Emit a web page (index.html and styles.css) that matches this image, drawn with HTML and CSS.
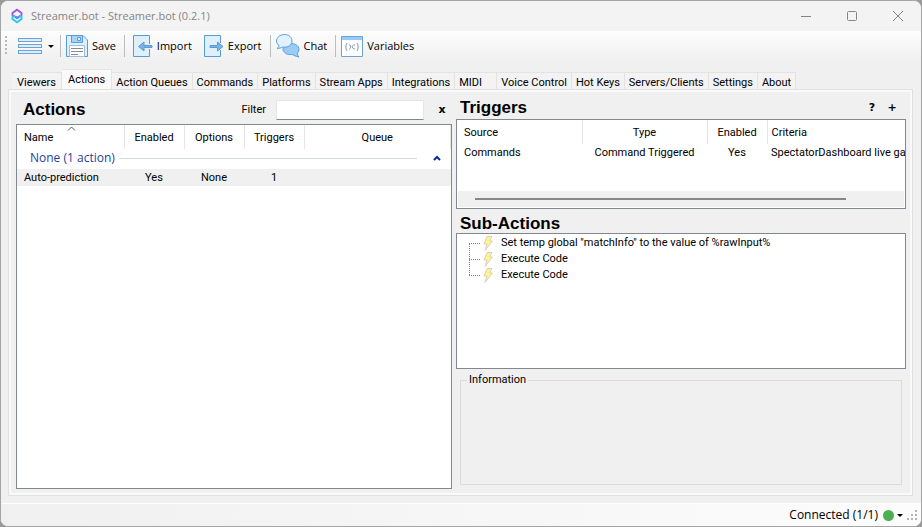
FILE: index.html
```html
<!DOCTYPE html>
<html lang="en">
<head>
<meta charset="utf-8">
<title>Streamer.bot - Streamer.bot (0.2.1)</title>
<link rel="stylesheet" href="styles.css">
</head>
<body>
<div class="window">
  <header class="titlebar">
    <svg class="logo" width="12" height="16" viewBox="0 0 12 16" fill="none" stroke-width="2">
      <path d="M3.500 8.500L1.500 7V5L6 1.800L10.500 5V7L6 10L4 8.500" stroke="#a45be0"/>
      <path d="M8.500 7.500L10.500 9V11L6 14.200L1.500 11V9L4 7.500" stroke="#2cc9ee"/>
      <path d="M4 8.500L6 10L8 8.500" stroke="#5b8cf0"/>
    </svg>
    <h1 class="caption">Streamer.bot - Streamer.bot (0.2.1)</h1>
    <div class="window-buttons">
      <button aria-label="Minimize"><svg width="12" height="12" viewBox="0 0 12 12"><path d="M1 6.500H11"/></svg></button>
      <button aria-label="Maximize"><svg width="12" height="12" viewBox="0 0 12 12"><rect x="1.500" y="1.500" width="9" height="9" rx="1"/></svg></button>
      <button aria-label="Close"><svg width="12" height="12" viewBox="0 0 12 12"><path d="M1 1L11 11M11 1L1 11"/></svg></button>
    </div>
  </header>

  <nav class="toolbar" aria-label="Main">
    <span class="grip"></span>
    <button class="tool menu" aria-label="Menu">
      <svg width="24" height="22" viewBox="0 0 24 22" fill="#dcedfb" stroke="#6ba3d6"><rect x=".5" y="3.500" width="23" height="3"/><rect x=".5" y="9.500" width="23" height="3"/><rect x=".5" y="15.500" width="23" height="3"/></svg>
      <i class="arrow"></i>
    </button>
    <button class="tool save">
      <svg width="22" height="22" viewBox="0 0 22 22" fill="#dff0fd" stroke="#5b9bd5"><path d="M.5.500H17L21.500 5V21.500H.5z"/><path d="M5.500.500H16.500V7.500H5.500z" fill="#a9d3f7"/><path d="M11.500 2.500H14.500V5.500H11.500z" fill="#e4f2fe"/><path d="M3.500 10.500H18.500V21.500H3.500z" fill="#fff" stroke="#9bbfe0"/><path d="M5 13.500H17M5 16.500H17M5 19.500H12" stroke="#8a8a8a"/></svg>
      Save
    </button>
    <button class="tool import">
      <svg width="20" height="22" viewBox="0 0 20 22" fill="#dff0fd" stroke="#5b9bd5"><path d="M16.500 9V.500H.5V21.500H16.500V14"/><path d="M5.500 11.500L11 7V10.500H19V12.500H11V16z" fill="#7ab4e6"/></svg>
      Import
    </button>
    <button class="tool export">
      <svg width="20" height="22" viewBox="0 0 20 22" fill="#dff0fd" stroke="#5b9bd5"><path d="M16.500 8V.500H.5V21.500H16.500V15"/><path d="M19 11.500L13.500 7V10.500H6V12.500H13.500V16z" fill="#7ab4e6"/></svg>
      Export
    </button>
    <button class="tool chat">
      <svg width="24" height="24" viewBox="0 0 24 24" stroke="#5a9ddb"><path d="M15 9.500C8 9.500 7 13 7 15C7 18.500 11 21 15.500 20.500C17.500 20.500 19 22.500 23 23C21.500 21.500 21 20 21.500 19C25 15 22 9.500 15 9.500z" fill="#99cbf8"/><path d="M8.500.5C4 .5.5 3.500.5 7C.5 9 1.500 10.500 3 11.500C3 13 2 14 1 14.500C3 14.500 5 14 6.500 13C12 14 16 11 16 7C16 3.500 13 .5 8.500.5z" fill="#e1f1fd"/></svg>
      Chat
    </button>
    <button class="tool variables">
      <svg width="22" height="22" viewBox="0 0 22 22" fill="none" stroke="#6ba3d6"><path d="M.5 1.500H21.500V21.500H.5z" fill="#fff"/><path d="M1 2H21V5H1z" fill="#99cbf8" stroke="none"/><path d="M6 8C4.500 10 4.500 14 6 16M16 8C17.500 10 17.500 14 16 16M8 10C10.500 9 10 14.500 8 14M14 10C10.500 9 10.500 14.500 14 14" stroke="#7797b5"/></svg>
      Variables
    </button>
  </nav>

  <nav class="tabs" aria-label="Sections">
    <a href="#viewers">Viewers</a><a href="#actions" class="active" aria-current="page">Actions</a><a href="#queues">Action Queues</a><a href="#commands">Commands</a><a href="#platforms">Platforms</a><a href="#apps">Stream Apps</a><a href="#integrations">Integrations</a><a href="#midi" class="short">MIDI</a><a href="#voice">Voice Control</a><a href="#keys">Hot Keys</a><a href="#servers">Servers/Clients</a><a href="#settings">Settings</a><a href="#about">About</a>
  </nav>

  <main class="page">
    <section class="actions">
      <div class="section-head filter-head">
        <h2>Actions</h2>
        <label for="filter">Filter</label>
        <input id="filter" type="text">
        <button class="glyph" aria-label="Clear filter">x</button>
      </div>
      <div class="list">
        <table class="action-table">
          <colgroup><col class="name"><col class="narrow"><col class="narrow"><col class="narrow"><col></colgroup>
          <thead><tr><th class="left sorted">Name<svg class="sort" width="9" height="5" viewBox="0 0 9 5" fill="none" stroke="#555"><path d="M1 4.500L4.500 1L8 4.500"/></svg></th><th>Enabled</th><th>Options</th><th>Triggers</th><th>Queue</th></tr></thead>
          <tbody>
            <tr class="group"><td colspan="5"><button class="group-toggle"><span>None (1 action)</span><span class="rule"></span><svg width="8" height="6" viewBox="0 0 8 6" fill="none" stroke="#00308f" stroke-width="2"><path d="M1 5L4 2L7 5"/></svg></button></td></tr>
            <tr class="selected"><td class="left">Auto-prediction</td><td>Yes</td><td>None</td><td>1</td><td></td></tr>
          </tbody>
        </table>
      </div>
    </section>

    <section class="details">
      <div class="section-head">
        <h2>Triggers</h2>
        <button class="glyph" aria-label="Help">?</button>
        <button class="glyph" aria-label="Add trigger">+</button>
      </div>
      <div class="list triggers">
        <table class="trigger-table">
          <colgroup><col class="wide"><col class="wide"><col class="narrow"><col></colgroup>
          <thead><tr><th class="left">Source</th><th>Type</th><th>Enabled</th><th class="left clip">Criteria</th></tr></thead>
          <tbody><tr><td class="left">Commands</td><td>Command Triggered</td><td>Yes</td><td class="left clip">SpectatorDashboard live game</td></tr></tbody>
        </table>
        <div class="scrollbar"><span></span></div>
      </div>
      <div class="section-head sub-head"><h2>Sub-Actions</h2></div>
      <ul class="list tree">
        <li><svg class="bolt" width="10" height="15" viewBox="0 0 10 15"><path d="M4 .5H9L6.500 5H9.500L2 14.500L4 8H1z" fill="#fdf68a" stroke="#d9cfc0"/></svg>Set temp global "matchInfo" to the value of %rawInput%</li>
        <li><svg class="bolt" width="10" height="15" viewBox="0 0 10 15"><path d="M4 .5H9L6.500 5H9.500L2 14.500L4 8H1z" fill="#fdf68a" stroke="#d9cfc0"/></svg>Execute Code</li>
        <li><svg class="bolt" width="10" height="15" viewBox="0 0 10 15"><path d="M4 .5H9L6.500 5H9.500L2 14.500L4 8H1z" fill="#fdf68a" stroke="#d9cfc0"/></svg>Execute Code</li>
      </ul>
      <fieldset class="info"><legend>Information</legend></fieldset>
    </section>
  </main>

  <footer class="status">
    <button class="connection">Connected (1/1)<span class="dot"></span><i class="arrow"></i></button>
    <svg width="11" height="11" viewBox="0 0 11 11" fill="#b4b4b4"><path d="M8 0h2v2h-2zM4 4h2v2h-2zM8 4h2v2h-2zM0 8h2v2h-2zM4 8h2v2h-2zM8 8h2v2h-2z"/></svg>
  </footer>
</div>
</body>
</html>
```
FILE: styles.css
```css
* { box-sizing: border-box; }
body {
  margin: 0;
  background: #9a9a9a;
  color: #000;
  font: 11px/16px Roboto, "Liberation Sans", sans-serif;
}
button { border: 0; padding: 0; background: none; color: inherit; font: inherit; }
h1, h2 { margin: 0; }
svg { display: block; flex: none; }

.window {
  display: flex;
  flex-direction: column;
  min-height: 100vh;
  border: 1px solid #a5a5a5;
  border-radius: 8px;
  background: #f0f0f0;
  overflow: hidden;
}

.titlebar { display: flex; align-items: center; height: 30px; padding-left: 10px; background: #f3f3f3; }
.caption { flex: 1; margin-left: 8px; color: #858585; font: 11px/16px "Open Sans", sans-serif; }
.window-buttons { display: flex; }
.window-buttons button { display: grid; place-items: center; width: 46px; height: 30px; }
.window-buttons svg { fill: none; stroke: #858585; }

.toolbar {
  display: flex;
  align-items: center;
  height: 30px;
  margin-bottom: 2px;
  padding-left: 4px;
  background: linear-gradient(#fdfdfd, #f0f0f0);
  font: 11px/16px "Open Sans", sans-serif;
}
.grip { width: 2px; height: 20px; margin-right: 11px; background: repeating-linear-gradient(#b8b8b8 0 2px, transparent 2px 4px); }
.tool { display: flex; align-items: center; height: 22px; gap: 4px; }
.save, .import, .chat, .variables { margin-left: 8px; padding-left: 5px; border-left: 1px solid #bdbdbd; }
.save { margin-left: 6px; }
.import { padding-left: 8px; }
.export { margin-left: 12px; }
.menu { gap: 6px; }
.arrow { border: 3px solid transparent; border-top-color: #000; border-bottom: 0; }

.tabs { display: flex; align-items: flex-end; height: 27px; padding-left: 11px; }
.tabs a {
  height: 18px;
  padding: 0 4px;
  border: 1px solid #e3e3e3;
  border-width: 1px 1px 0 0;
  background: #f3f3f3;
  color: #000;
  line-height: 19px;
  white-space: nowrap;
  text-decoration: none;
}
.tabs a:first-child { padding: 0 5px; }
.tabs a.active { height: 21px; padding: 0 6px; background: #fafafa; }
.tabs .short { width: 42px; }

.page {
  flex: 1;
  display: grid;
  grid-template-columns: 436fr 450fr;
  gap: 4px;
  margin: 0 9px 8px 8px;
  padding: 3px 4px 4px 5px;
  border: 2px solid #fafafa;
  outline: 1px solid #e0e0e0;
  min-width: 0;
}
.actions, .details { display: flex; flex-direction: column; min-width: 0; }
.section-head { display: flex; align-items: center; height: 24px; padding: 0 8px 0 4px; }
.section-head h2 { flex: 1; font: bold 17px/20px "Liberation Sans", Arial, sans-serif; }
.filter-head { height: 29px; padding: 0 4px 0 7px; }
.filter-head input {
  width: 148px;
  height: 20px;
  margin: 0 12px 0 10px;
  border: 1px solid #e5e5e5;
  border-bottom-color: #868686;
  background: #fff;
  font: inherit;
}
.glyph { width: 12px; margin-left: 8px; font: bold 11px/16px "DejaVu Sans", sans-serif; }
.filter-head .glyph { margin-left: 0; }
.details .section-head { padding-top: 2px; }
.details .sub-head { padding-top: 5px; }

.list { margin: 0; border: 1px solid #828790; background: #fff; }
.actions .list { flex: 1; }
table { width: 100%; border-collapse: collapse; table-layout: fixed; }
.name { width: 107px; }
.narrow { width: 60px; }
.wide { width: 125px; }
th { height: 24px; padding: 2px 7px 0; border-right: 1px solid #e5e5e5; font-weight: normal; }
td { height: 17px; padding: 0 7px; text-align: center; white-space: nowrap; }
.trigger-table th:last-child { border-right: 0; }
.left { text-align: left; }
.clip { padding-left: 4px; padding-right: 0; overflow: hidden; }
.sorted { position: relative; }
.sort { position: absolute; top: 1px; left: 50px; }
.group td { padding: 0 10px 2px 13px; height: 20px; }
.group-toggle { display: flex; align-items: center; width: 100%; gap: 4px; color: #1e3f9c; font: 12px/16px "Open Sans", sans-serif; }
.rule { flex: 1; height: 1px; margin-right: 12px; background: #cfdbe8; }
.selected { background: #f0f0f0; }

.triggers { height: 90px; display: flex; flex-direction: column; justify-content: space-between; }
.scrollbar { height: 16px; margin: 0 1px 1px; padding: 7px 58px 0 17px; background: #f0f0f0; }
.scrollbar span { display: block; height: 2px; background: #868686; }

.tree { height: 136px; padding: 1px 0 0 12px; list-style: none; }
.tree li { position: relative; display: flex; align-items: center; height: 16px; padding-left: 14px; gap: 8px; white-space: nowrap; }
.tree li::before { content: ""; position: absolute; left: 0; top: 8px; width: 11px; border-top: 1px dotted #808080; }
.tree li + li::after { content: ""; position: absolute; left: 0; top: -8px; height: 16px; border-left: 1px dotted #808080; }

.info { flex: 1; min-width: 0; margin: 3px 4px 4px; padding: 0; border: 1px solid #dcdcdc; }
.info legend { margin-left: 6px; padding: 0 2px; }

.status {
  display: flex;
  align-items: center;
  justify-content: flex-end;
  height: 23px;
  padding-right: 3px;
  border-top: 1px solid #fff;
  background: linear-gradient(90deg, #f0f0f0, #fcfcfc);
}
.connection { display: flex; align-items: center; margin-right: 4px; font: 12px/16px "Open Sans", sans-serif; }
.dot { width: 11px; height: 11px; margin: 0 3px 0 5px; border-radius: 50%; background: #4caf50; }
```
